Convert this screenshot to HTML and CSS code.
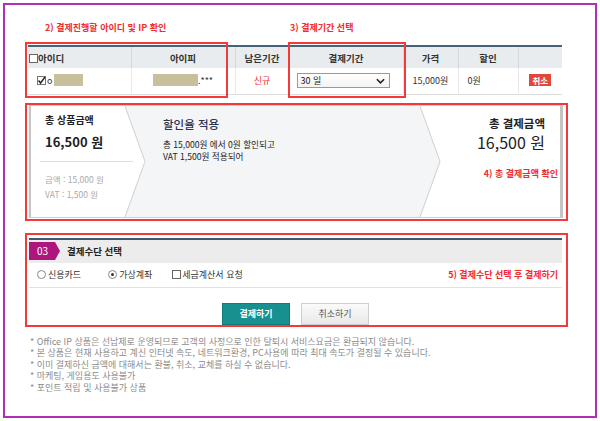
FILE: index.html
```html
<!DOCTYPE html>
<html lang="ko">
<head>
    <meta charset="UTF-8">
    <meta name="viewport" content="width=device-width, initial-scale=1.0">
    <title>결제하기 - Office IP</title>
    <link rel="stylesheet" href="styles.css">
</head>
<body>
    <div class="frame">
        <div class="annots">
            <span class="annot">2) 결제진행할 아이디 및 IP 확인</span>
            <span class="annot">3) 결제기간 선택</span>
        </div>

        <!-- 주문 목록 -->
        <div class="order">
            <table class="order-table">
                <colgroup>
                    <col class="c-id"><col class="c-ip"><col class="c-left"><col class="c-period">
                    <col class="c-price"><col class="c-sale"><col class="c-act">
                </colgroup>
                <thead>
                    <tr>
                        <th class="th-id"><span class="chk"></span>아이디</th>
                        <th>아이피</th>
                        <th>남은기간</th>
                        <th>결제기간</th>
                        <th>가격</th>
                        <th>할인</th>
                        <th></th>
                    </tr>
                </thead>
                <tbody>
                    <tr>
                        <td class="td-id">
                            <span class="chk checked">
                                <svg viewBox="0 0 9 9" width="9" height="9"><path d="M1.5 4.5 L3.6 7 L8 1" fill="none" stroke="#222" stroke-width="1.4"/></svg>
                            </span>o<span class="hidden-val id-val"></span>
                        </td>
                        <td class="center"><span class="hidden-val ip-val"></span>.***</td>
                        <td class="center new">신규</td>
                        <td class="td-period">
                            <div class="select">
                                <span>30 일</span>
                                <svg viewBox="0 0 10 6" width="9" height="6"><path d="M1 1 L5 5 L9 1" fill="none" stroke="#222" stroke-width="1.8"/></svg>
                            </div>
                        </td>
                        <td class="num">15,000원</td>
                        <td class="num">0원</td>
                        <td class="center"><span class="cancel-tag">취소</span></td>
                    </tr>
                </tbody>
            </table>
            <span class="mark mark-id"></span>
            <span class="mark mark-period"></span>
        </div>

        <!-- 금액 요약 -->
        <div class="boxed summary-box">
            <div class="summary">
                <svg class="summary-bg" viewBox="0 0 529 111" preserveAspectRatio="none">
                    <polygon points="94,0 389,0 409,55.5 389,111 94,111 114,55.5" fill="#f4f5f7"/>
                    <polyline points="94,0 114,55.5 94,111" fill="none" stroke="#cfcfcf"/>
                    <polyline points="389,0 409,55.5 389,111" fill="none" stroke="#cfcfcf"/>
                </svg>
                <div class="sum-col sum-goods">
                    <p class="sum-title">총 상품금액</p>
                    <p class="sum-price">16,500 원</p>
                    <hr class="sum-line">
                    <p class="sum-detail first">금액 : 15,000 원</p>
                    <p class="sum-detail">VAT : 1,500 원</p>
                </div>
                <div class="sum-col sum-discount">
                    <p class="disc-title">할인율 적용</p>
                    <p class="disc-text">총 15,000원 에서 0원 할인되고<br>VAT 1,500원 적용되어</p>
                </div>
                <div class="sum-col sum-pay">
                    <p class="pay-title">총 결제금액</p>
                    <p class="pay-price">16,500 원</p>
                    <p class="annot pay-annot">4) 총 결제금액 확인</p>
                </div>
            </div>
        </div>

        <!-- 결제수단 -->
        <div class="boxed pay-box">
            <div class="pay-head">
                <span class="step-no">03</span>
                <h3>결제수단 선택</h3>
            </div>
            <div class="pay-opts">
                <span class="radio"></span><span class="opt-label">신용카드</span>
                <span class="radio checked gap-l"></span><span class="opt-label">가상계좌</span>
                <span class="chk gap-c"></span><span class="opt-label">세금계산서 요청</span>
                <span class="annot opts-annot">5) 결제수단 선택 후 결제하기</span>
            </div>
            <div class="btns">
                <button class="btn btn-pay">결제하기</button>
                <button class="btn btn-cancel">취소하기</button>
            </div>
        </div>

        <ul class="notice">
            <li>* Office IP 상품은 선납제로 운영되므로 고객의 사정으로 인한 탈퇴시 서비스요금은 환급되지 않습니다.</li>
            <li>* 본 상품은 현재 사용하고 계신 인터넷 속도, 네트워크환경, PC사용에 따라 최대 속도가 결정될 수 있습니다.</li>
            <li>* 이미 결제하신 금액에 대해서는 환불, 취소, 교체를 하실 수 없습니다.</li>
            <li>* 마케팅, 게임용도 사용불가</li>
            <li>* 포인트 적립 및 사용불가 상품</li>
        </ul>
    </div>
</body>
</html>
```

FILE: styles.css
```css
* {
    margin: 0;
    padding: 0;
    box-sizing: border-box;
}

body {
    font-family: "Noto Sans CJK KR", "Noto Sans", sans-serif;
    color: #333;
    background: #fff;
}

.frame {
    margin: 3px;
    width: 594px;
    height: 415px;
    border: 2px solid #b22fb2;
    padding-left: 20px;
}

/* 빨간 안내 문구 */
.annot {
    color: #f52a2a;
    font-size: 9px;
    font-weight: 700;
    line-height: 12px;
    white-space: nowrap;
}

.annots {
    display: grid;
    grid-template-columns: 245px auto;
    align-items: end;
    height: 37px;
    padding: 0 0 8px 20px;
}

.mark {
    position: absolute;
    top: 0;
    height: 56px;
    border: 2px solid #f23a3a;
    pointer-events: none;
}

.mark-id {
    left: 0;
    width: 203px;
}

.mark-period {
    left: 263px;
    width: 118px;
}

/* 주문 테이블 */
.order {
    position: relative;
    width: 543px;
    padding: 3px 0 0 3px;
}

.order-table {
    width: 534px;
    table-layout: fixed;
    border-collapse: collapse;
    border-top: 2px solid #4a6276;
    border-bottom: 1px solid #dcdcdc;
    font-size: 9px;
}

.c-id { width: 103px; }
.c-ip { width: 104px; }
.c-left { width: 54px; }
.c-period { width: 114px; }
.c-price { width: 55px; }
.c-sale { width: 60px; }
.c-act { width: 44px; }

.order-table th {
    height: 22px;
    background: #e9ecee;
    font-size: 9.5px;
    font-weight: 700;
    color: #333;
    border-right: 1px solid #d3d9de;
    white-space: nowrap;
}

.order-table td {
    height: 26px;
    border-right: 1px solid #e8e8e8;
    white-space: nowrap;
}

.order-table th:last-child,
.order-table td:last-child {
    border-right: none;
}

.order-table .th-id {
    text-align: left;
    padding-left: 1px;
}

.chk {
    display: inline-block;
    width: 9px;
    height: 9px;
    border: 1px solid #666;
    background: #fff;
    vertical-align: -1px;
}

.chk.checked {
    border-color: #777;
    margin-right: 1px;
}

.chk svg {
    display: block;
    margin: -1px;
}

.td-id {
    padding-left: 9px;
}

.hidden-val {
    display: inline-block;
    height: 12px;
    background: #c8bf9c;
    vertical-align: -2px;
}

.id-val {
    width: 29px;
    margin-left: 2px;
}

.ip-val {
    width: 45px;
}

.center {
    text-align: center;
}

.new {
    color: #f03030;
}

.td-period {
    padding-left: 7px;
}

.select {
    display: flex;
    align-items: center;
    justify-content: space-between;
    width: 93px;
    height: 15px;
    padding: 0 4px 0 3px;
    border: 1px solid #999;
    background: linear-gradient(#fff, #f3f3f3);
    font-size: 9px;
    color: #222;
}

.num {
    padding-left: 9px;
}

.cancel-tag {
    display: inline-block;
    padding: 0 3px;
    background: #e2483a;
    color: #fff;
    font-size: 8.5px;
    font-weight: 700;
    line-height: 12px;
}

/* 빨간 테두리 박스 */
.boxed {
    width: 543px;
    border: 2px solid #f23a3a;
}

/* 금액 요약 */
.summary-box {
    margin-top: 8px;
    padding: 0 3px 1px 2px;
}

.summary {
    position: relative;
    display: grid;
    grid-template-columns: 132px 1fr auto;
    height: 113px;
    border: 1px solid #d0d0d0;
    border-left: 2px solid #c4c4c4;
    border-right: 3px solid #c4c4c4;
}

.summary-bg {
    position: absolute;
    inset: 0;
    width: 100%;
    height: 100%;
}

.sum-col {
    position: relative;
}

.sum-goods {
    padding: 7px 0 0 9px;
}

.sum-goods p {
    padding-left: 5px;
}

.sum-title {
    font-size: 10px;
    font-weight: 700;
    line-height: 14px;
    color: #222;
}

.sum-price {
    margin-top: 6px;
    font-size: 13px;
    font-weight: 700;
    line-height: 18px;
    color: #222;
}

.sum-line {
    width: 93px;
    margin-top: 10px;
    border: none;
    border-top: 1px solid #dedede;
}

.sum-detail {
    font-size: 8.5px;
    line-height: 15px;
    color: #aaa;
}

.sum-detail.first {
    margin-top: 10px;
}

.sum-discount {
    padding-top: 10px;
}

.disc-title {
    font-size: 11.5px;
    font-weight: 500;
    line-height: 16px;
    color: #2c3350;
}

.disc-text {
    margin-top: 6px;
    font-size: 8.6px;
    line-height: 12px;
    color: #222;
}

.sum-pay {
    padding: 9px 2px 0 0;
    text-align: right;
}

.pay-title,
.pay-price {
    margin-right: 13px;
}

.pay-title {
    font-size: 11.5px;
    font-weight: 700;
    line-height: 16px;
    color: #222;
}

.pay-price {
    margin-top: 1px;
    font-size: 16px;
    line-height: 20px;
    color: #222;
}

.pay-annot {
    margin-top: 16px;
}

/* 결제수단 */
.pay-box {
    margin-top: 12px;
    padding: 3px 4px 0 2px;
}

.pay-head {
    display: flex;
    align-items: center;
    height: 25px;
    border-top: 2px solid #3f5a6e;
    background: #ececec;
}

.step-no {
    width: 31px;
    height: 18px;
    padding-left: 8px;
    background: #ae167d;
    clip-path: polygon(0 0, 26px 0, 31px 50%, 26px 100%, 0 100%);
    color: #fff;
    font-size: 10px;
    line-height: 18px;
}

.pay-head h3 {
    margin-left: 7px;
    font-size: 9.5px;
    font-weight: 700;
    color: #222;
}

.pay-opts {
    display: flex;
    align-items: center;
    height: 25px;
    padding: 0 4px 0 8px;
    border-bottom: 1px solid #e2e2e2;
    font-size: 9px;
    color: #333;
}

.radio {
    width: 9px;
    height: 9px;
    border: 1px solid #888;
    border-radius: 50%;
    background: #fff;
    position: relative;
}

.radio.checked::after {
    content: "";
    position: absolute;
    left: 2px;
    top: 2px;
    width: 3px;
    height: 3px;
    border-radius: 50%;
    background: #333;
}

.opt-label {
    margin-left: 2px;
}

.gap-l {
    margin-left: 27px;
}

.gap-c {
    margin-left: 20px;
    margin-right: -1px;
}

.opts-annot {
    margin-left: auto;
}

.btns {
    display: flex;
    justify-content: center;
    gap: 11px;
    padding-top: 15px;
}

.btn {
    width: 68px;
    height: 22px;
    font-family: inherit;
    font-size: 9px;
    cursor: pointer;
}

.btn-pay {
    border: 1px solid #127c7c;
    background: #17908f;
    color: #fff;
    font-weight: 700;
}

.btn-cancel {
    border: 1px solid #cfcfcf;
    background: linear-gradient(#fafafa, #e9e9e9);
    color: #555;
}

/* 하단 안내 */
.notice {
    margin-top: 9px;
    padding-left: 5px;
    list-style: none;
    font-size: 9px;
    line-height: 11.6px;
    color: #8c8c8c;
}
```
